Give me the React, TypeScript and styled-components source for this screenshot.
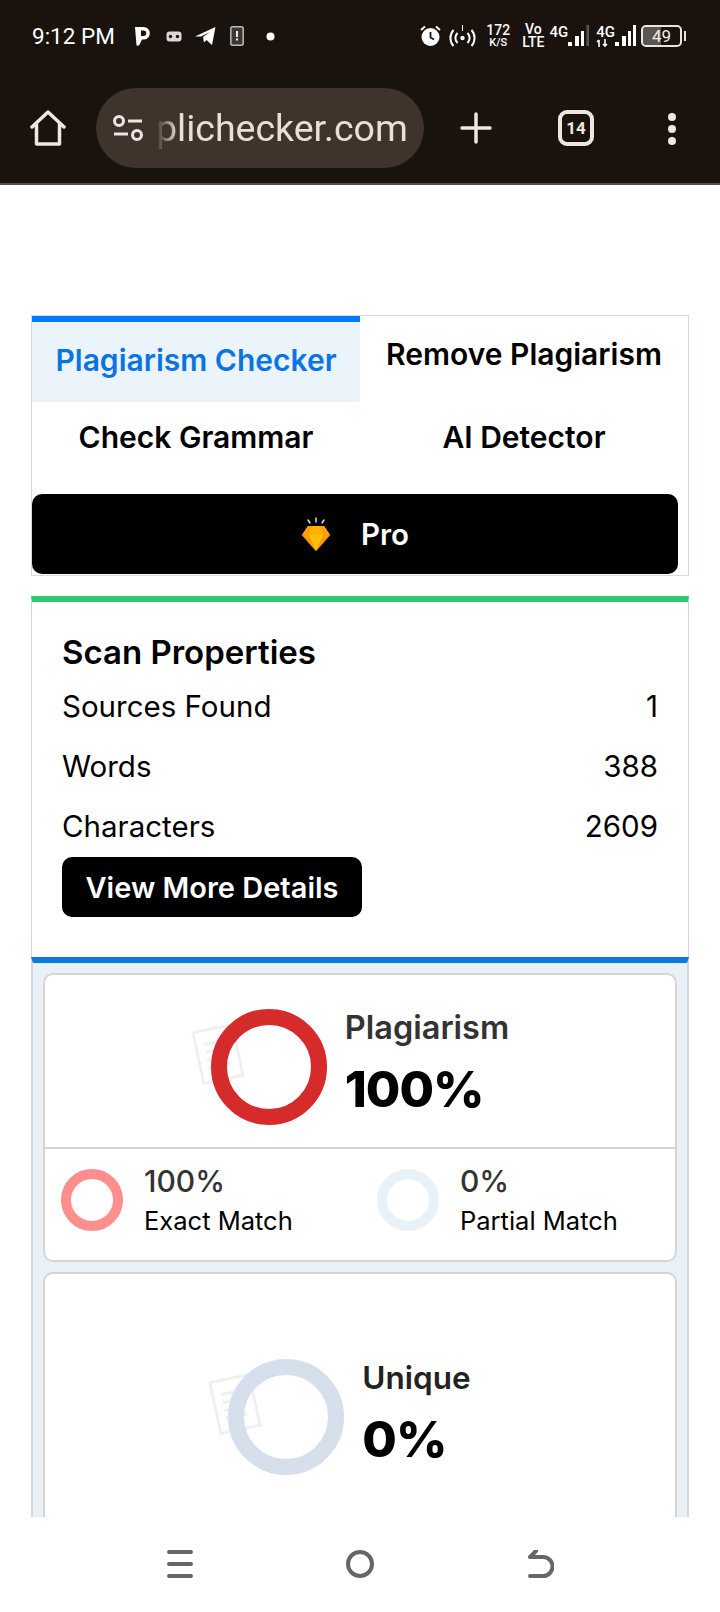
import styled, { createGlobalStyle } from "styled-components";

const GlobalStyle = createGlobalStyle`
  html, body {
    margin: 0;
    padding: 0;
    background: #fff;
  }
  * {
    box-sizing: border-box;
  }
`;

const Page = styled.div`
  width: 720px;
  height: 1612px;
  display: flex;
  flex-direction: column;
  overflow: hidden;
  font-family: Inter, "Liberation Sans", sans-serif;
  color: #000;
`;

const Chrome = styled.header`
  flex: none;
  height: 185px;
  background: #1a120d;
  border-bottom: 2px solid #5c4d44;
`;

const StatusBar = styled.div`
  height: 72px;
  padding: 0 38px 0 32px;
  display: flex;
  align-items: center;
  justify-content: space-between;
  color: #fff;
`;

const StatusGroup = styled.div`
  display: flex;
  align-items: center;
`;

const Time = styled.span`
  font-family: Roboto, sans-serif;
  font-size: 22.5px;
  margin-right: 20px;
`;

const StatusIcon = styled.svg<{ $gap?: number }>`
  display: block;
  flex: none;
  margin-right: ${(p) => p.$gap ?? 0}px;
`;

const Stacked = styled.div<{ $gap?: number }>`
  display: flex;
  flex-direction: column;
  align-items: center;
  font-family: Roboto, sans-serif;
  font-weight: 500;
  margin-right: ${(p) => p.$gap ?? 0}px;
`;

const Big = styled.span`
  font-size: 14px;
  line-height: 13px;
`;

const Small = styled.span`
  font-size: 11px;
  line-height: 11px;
`;

const NetworkStack = styled.div`
  display: flex;
  flex-direction: column;
  align-items: flex-start;
  height: 22px;
  font-family: Roboto, sans-serif;
  font-size: 15px;
  font-weight: 500;
  line-height: 14px;
`;

const Battery = styled.div`
  position: relative;
  width: 41px;
  height: 22px;
  margin-left: 5px;
  border: 2px solid #e8e4e0;
  border-radius: 5px;
  display: flex;
  align-items: center;
  justify-content: center;
  font-family: Roboto, sans-serif;
  font-size: 17px;
  color: #f0ece8;
  background: linear-gradient(90deg, #5b5552 0 50%, transparent 50%);
  background-clip: padding-box;

  &::after {
    content: "";
    position: absolute;
    right: -6px;
    top: 4px;
    width: 2px;
    height: 10px;
    background: #e8e4e0;
  }
`;

const Toolbar = styled.div`
  height: 111px;
  display: flex;
  align-items: flex-start;
  padding-top: 16px;
  color: #efe6e1;
`;

const ToolIcon = styled.svg`
  display: block;
  flex: none;
`;

const HomeSlot = styled.div`
  width: 96px;
  height: 80px;
  padding-left: 30px;
  display: flex;
  align-items: center;
`;

const UrlPill = styled.div`
  width: 328px;
  height: 80px;
  border-radius: 40px;
  background: #40332c;
  display: flex;
  align-items: center;
  padding-left: 17px;
`;

const UrlText = styled.span`
  font-family: Roboto, sans-serif;
  font-size: 37.5px;
  margin-left: 13px;
  color: #e9dfd9;
  -webkit-mask-image: linear-gradient(90deg, transparent 0, #000 22px);
  mask-image: linear-gradient(90deg, transparent 0, #000 22px);
`;

const PlusSlot = styled.div`
  margin-left: 36px;
  height: 80px;
  display: flex;
  align-items: center;
`;

const TabCount = styled.div`
  margin: 22px 0 0 66px;
  width: 36px;
  height: 36px;
  border: 4px solid #efe6e1;
  border-radius: 9px;
  display: flex;
  align-items: center;
  justify-content: center;
  font-family: Roboto, sans-serif;
  font-size: 17px;
  font-weight: 700;
`;

const Dots = styled.div`
  margin: 25px 0 0 74px;
  display: flex;
  flex-direction: column;
  gap: 4px;
`;

const Dot = styled.span`
  width: 8px;
  height: 8px;
  border-radius: 50%;
  background: #efe6e1;
`;

const Content = styled.main`
  flex: 1;
  min-height: 0;
  overflow: hidden;
  padding: 130px 31px 0;
`;

const TabsCard = styled.section`
  height: 261px;
  border: 1px solid #cfdce8;
`;

const TabGrid = styled.div`
  display: grid;
  grid-template-columns: 328px 1fr;
  grid-template-rows: 86px 92px;
`;

const Tab = styled.div<{ $active?: boolean; $top: number }>`
  padding-top: ${(p) => p.$top}px;
  border-top: ${(p) => (p.$active ? "6px solid #007bff" : "none")};
  background: ${(p) => (p.$active ? "#ebf3fb" : "transparent")};
  color: ${(p) => (p.$active ? "#0b74e5" : "#000")};
  text-align: center;
  font-size: 30px;
  font-weight: 600;
  line-height: 36px;
  white-space: nowrap;
`;

const ProButton = styled.div`
  width: 646px;
  height: 80px;
  border-radius: 10px;
  background: #000;
  color: #fff;
  display: flex;
  align-items: center;
  justify-content: center;
  gap: 30px;
  font-size: 29.5px;
  font-weight: 600;
  line-height: 36px;
  padding-bottom: 1px;
`;

const ScanCard = styled.section`
  margin-top: 20px;
  height: 361px;
  border: 1px solid #d6d6d6;
  border-top: 6px solid #2ec971;
  border-bottom: 0;
  padding: 32px 30px 0;
`;

const ScanTitle = styled.h2`
  margin: 0 0 6px;
  font-size: 33px;
  font-weight: 600;
  line-height: 36px;
`;

const ScanRow = styled.div`
  height: 60px;
  display: flex;
  align-items: center;
  justify-content: space-between;
  font-size: 29.5px;
  font-weight: 400;
`;

const DetailsButton = styled.div`
  width: 300px;
  height: 60px;
  margin-top: 1px;
  border-radius: 10px;
  background: #000;
  color: #fff;
  display: flex;
  align-items: center;
  justify-content: center;
  font-size: 29px;
  font-weight: 600;
`;

const ResultPanel = styled.section`
  border: 2px solid #d6d6d6;
  border-top: 6px solid #0d7ae0;
  border-bottom: 0;
  background: #e8f0f8;
  padding: 10px 10px 40px;
  display: flex;
  flex-direction: column;
  gap: 10px;
`;

const ResultCard = styled.div`
  background: #fff;
  border: 2px solid #d5d5d5;
  border-radius: 10px;
`;

const Hero = styled.div<{ $top: number; $bottom: number }>`
  padding: ${(p) => p.$top}px 0 ${(p) => p.$bottom}px;
  display: flex;
  align-items: center;
  justify-content: center;
`;

const RingWrap = styled.div`
  position: relative;
  flex: none;
`;

const Ring = styled.div<{ $size: number; $width: number; $color: string }>`
  position: relative;
  width: ${(p) => p.$size}px;
  height: ${(p) => p.$size}px;
  border-radius: 50%;
  border: ${(p) => p.$width}px solid ${(p) => p.$color};
`;

const Watermark = styled.svg`
  position: absolute;
  left: -20px;
  top: 13px;
`;

const HeroText = styled.div<{ $trail?: number }>`
  margin: -2px 0 0 18px;
  padding-right: ${(p) => p.$trail ?? 0}px;
`;

const HeroLabel = styled.div<{ $color: string; $size: number }>`
  font-size: ${(p) => p.$size}px;
  font-weight: 600;
  line-height: 40px;
  color: ${(p) => p.$color};
`;

const HeroValue = styled.div`
  font-size: 50px;
  font-weight: 800;
  letter-spacing: -1px;
  line-height: 70px;
  margin-top: 6px;
`;

const Breakdown = styled.div`
  border-top: 2px solid #d5d5d5;
  display: grid;
  grid-template-columns: 316px 1fr;
  height: 113px;
`;

const BreakdownItem = styled.div`
  padding: 20px 0 0 16px;
  display: flex;
  align-items: flex-start;
  gap: 21px;
`;

const BreakdownValue = styled.div`
  font-size: 30px;
  font-weight: 500;
  line-height: 38px;
  color: #333;
  margin-top: -7px;
`;

const BreakdownLabel = styled.div`
  font-size: 25.5px;
  line-height: 32px;
  margin-top: 5px;
`;

const BottomNav = styled.nav`
  flex: none;
  height: 95px;
  background: #fff;
  display: flex;
  align-items: flex-start;
  padding: 33px 0 0 167px;
  color: #666;
`;

const NavIcon = styled.svg<{ $gap?: number }>`
  display: block;
  flex: none;
  margin-right: ${(p) => p.$gap ?? 0}px;
`;

function DocMark() {
  return (
    <Watermark width="54" height="64" viewBox="0 0 54 64" fill="none" stroke="#f0f0f0" strokeWidth="3">
      <g transform="rotate(-12 27 32)">
        <rect x="7" y="6" width="40" height="52" />
        <path d="M15 20h22M15 28h22M15 36h22M15 44h22" strokeWidth="3" />
      </g>
    </Watermark>
  );
}

function Diamond() {
  return (
    <svg width="30" height="34" viewBox="0 0 30 34">
      <path d="M15 1v4M7 3l2 3M23 3l-2 3" stroke="#ddd" strokeWidth="1.5" strokeLinecap="round" />
      <path d="M7 9h16l6 9-14 16L1 18z" fill="#ffc107" />
      <path d="M1 18h7l7 16z" fill="#ff9800" />
      <path d="M29 18h-7l-7 16z" fill="#ff9800" />
      <path d="M8 18l3-9h8l3 9z" fill="#ffb300" />
      <path d="M7 9l4 0-3 9H1z" fill="#ffa000" />
      <path d="M23 9h-4l3 9h7z" fill="#ffa000" />
    </svg>
  );
}

export default function App() {
  return (
    <Page>
      <GlobalStyle />
      <Chrome>
        <StatusBar>
          <StatusGroup>
            <Time>9:12 PM</Time>
            <StatusIcon $gap={16} width="15" height="20" viewBox="0 0 15 20">
              <path
                fillRule="evenodd"
                fill="#fff"
                d="M0 1h8.500a6.300 6.300 0 0 1 0 12.600H7L4 19.500H1.500zM6 4.500v5.500h2.500a2.750 2.750 0 0 0 0-5.500z"
              />
            </StatusIcon>
            <StatusIcon $gap={13} width="16" height="11" viewBox="0 0 16 11">
              <rect x="0.500" y="0.500" width="15" height="10" rx="3" fill="#d8d8d8" />
              <circle cx="4.500" cy="5.500" r="1.700" fill="#1a120d" />
              <circle cx="11.500" cy="5.500" r="1.700" fill="#1a120d" />
            </StatusIcon>
            <StatusIcon $gap={14} width="21" height="18" viewBox="0 0 21 18">
              <path fill="#fff" d="M0 9.500 20.500 0 17 18l-5.500-5-2.500 2.500-1-5.500 7-5-9 4.500z" />
            </StatusIcon>
            <StatusIcon $gap={22} width="14" height="20" viewBox="0 0 14 20">
              <rect x="0.800" y="0.800" width="12.400" height="18.400" rx="2" fill="#3b3735" stroke="#bdbdbd" strokeWidth="1.500" />
              <path d="M7 5v6M7 12.500v2" stroke="#eee" strokeWidth="2" />
            </StatusIcon>
            <StatusIcon width="9" height="9" viewBox="0 0 9 9">
              <circle cx="4.500" cy="4.500" r="4" fill="#fff" />
            </StatusIcon>
          </StatusGroup>
          <StatusGroup>
            <StatusIcon $gap={8} width="21" height="22" viewBox="0 0 21 22">
              <circle cx="10.500" cy="12" r="9" fill="#fff" />
              <path d="M10.500 7v5.500l3.500 2" stroke="#1a120d" strokeWidth="1.800" fill="none" />
              <path d="M1 5l4-3.500M20 5l-4-3.500" stroke="#fff" strokeWidth="2" />
            </StatusIcon>
            <StatusIcon $gap={10} width="27" height="24" viewBox="0 0 27 24" fill="none" stroke="#fff" strokeWidth="2">
              <circle cx="13.500" cy="14" r="2.200" fill="#fff" stroke="none" />
              <path d="M8.500 9a7 7 0 0 0 0 10M18.500 9a7 7 0 0 1 0 10M4.500 6a12 12 0 0 0 0 16M22.500 6a12 12 0 0 1 0 16" />
              <path d="M13.500 1v6" strokeWidth="1" />
            </StatusIcon>
            <Stacked $gap={12}>
              <Big>172</Big>
              <Small>K/S</Small>
            </Stacked>
            <Stacked $gap={5}>
              <Big>Vo</Big>
              <Big>LTE</Big>
            </Stacked>
            <NetworkStack>4G</NetworkStack>
            <StatusIcon $gap={7} width="21" height="22" viewBox="0 0 21 22">
              <rect x="0" y="17" width="4" height="4" fill="#fff" />
              <rect x="7" y="11" width="4" height="10" fill="#fff" />
              <rect x="13" y="6" width="3" height="15" fill="#fff" />
              <rect x="18.500" y="0" width="2.500" height="21" fill="#5b5552" />
            </StatusIcon>
            <NetworkStack>
              4G
              <StatusIcon width="12" height="8" viewBox="0 0 12 8">
                <path d="M3 8V1M1 3l2-2M9 0v7M7 5l2 2 2-2" stroke="#fff" strokeWidth="1.600" fill="none" />
              </StatusIcon>
            </NetworkStack>
            <StatusIcon width="21" height="22" viewBox="0 0 21 22">
              <rect x="0" y="17" width="4" height="4" fill="#fff" />
              <rect x="7" y="11" width="4" height="10" fill="#fff" />
              <rect x="13" y="6" width="3" height="15" fill="#fff" />
              <rect x="18" y="0" width="3" height="21" fill="#fff" />
            </StatusIcon>
            <Battery>49</Battery>
          </StatusGroup>
        </StatusBar>
        <Toolbar>
          <HomeSlot>
            <ToolIcon width="36" height="36" viewBox="0 0 36 36" fill="none" stroke="#efe6e1" strokeWidth="3.500" strokeLinejoin="round" strokeLinecap="round">
              <path d="M2 17 18 2l16 15M6.500 13.500V34h23V13.500" />
            </ToolIcon>
          </HomeSlot>
          <UrlPill>
            <ToolIcon width="30" height="26" viewBox="0 0 30 26" fill="none" stroke="#efe6e1" strokeWidth="3">
              <circle cx="6" cy="6" r="4.500" />
              <path d="M15 6h14M1 19h14" />
              <circle cx="24" cy="20" r="4.500" />
            </ToolIcon>
            <UrlText>plichecker.com</UrlText>
          </UrlPill>
          <PlusSlot>
            <ToolIcon width="32" height="32" viewBox="0 0 32 32" stroke="#efe6e1" strokeWidth="3.500" strokeLinecap="round">
              <path d="M16 2v28M2 16h28" />
            </ToolIcon>
          </PlusSlot>
          <TabCount>14</TabCount>
          <Dots>
            <Dot />
            <Dot />
            <Dot />
          </Dots>
        </Toolbar>
      </Chrome>

      <Content>
        <TabsCard>
          <TabGrid>
            <Tab $active $top={20}>Plagiarism Checker</Tab>
            <Tab $top={20}>Remove Plagiarism</Tab>
            <Tab $top={17}>Check Grammar</Tab>
            <Tab $top={17}>AI Detector</Tab>
          </TabGrid>
          <ProButton>
            <Diamond />
            Pro
          </ProButton>
        </TabsCard>

        <ScanCard>
          <ScanTitle>Scan Properties</ScanTitle>
          <ScanRow>
            <span>Sources Found</span>
            <span>1</span>
          </ScanRow>
          <ScanRow>
            <span>Words</span>
            <span>388</span>
          </ScanRow>
          <ScanRow>
            <span>Characters</span>
            <span>2609</span>
          </ScanRow>
          <DetailsButton>View More Details</DetailsButton>
        </ScanCard>

        <ResultPanel>
          <ResultCard>
            <Hero $top={34} $bottom={22}>
              <RingWrap>
                <DocMark />
                <Ring $size={116} $width={16} $color="#d62b2b" />
              </RingWrap>
              <HeroText>
                <HeroLabel $color="#333" $size={32.5}>Plagiarism</HeroLabel>
                <HeroValue>100%</HeroValue>
              </HeroText>
            </Hero>
            <Breakdown>
              <BreakdownItem>
                <Ring $size={62} $width={10} $color="#ff8f8f" />
                <div>
                  <BreakdownValue>100%</BreakdownValue>
                  <BreakdownLabel>Exact Match</BreakdownLabel>
                </div>
              </BreakdownItem>
              <BreakdownItem>
                <Ring $size={62} $width={10} $color="#e8f0f8" />
                <div>
                  <BreakdownValue>0%</BreakdownValue>
                  <BreakdownLabel>Partial Match</BreakdownLabel>
                </div>
              </BreakdownItem>
            </Breakdown>
          </ResultCard>
          <ResultCard>
            <Hero $top={85} $bottom={60}>
              <RingWrap>
                <DocMark />
                <Ring $size={116} $width={16} $color="#d6e0ec" />
              </RingWrap>
              <HeroText $trail={21}>
                <HeroLabel $color="#222" $size={31.5}>Unique</HeroLabel>
                <HeroValue>0%</HeroValue>
              </HeroText>
            </Hero>
          </ResultCard>
        </ResultPanel>
      </Content>

      <BottomNav>
        <NavIcon $gap={153} width="26" height="28" viewBox="0 0 26 28" stroke="#666" strokeWidth="4" strokeLinecap="round">
          <path d="M2 2h22M2 14h22M2 26h22" />
        </NavIcon>
        <NavIcon $gap={154} width="28" height="28" viewBox="0 0 28 28" fill="none" stroke="#666" strokeWidth="4">
          <circle cx="14" cy="14" r="12" />
        </NavIcon>
        <NavIcon width="26" height="28" viewBox="0 0 26 28" fill="none" stroke="#666" strokeWidth="4" strokeLinecap="round">
          <path d="M2 26h13a9 9 0 0 0 0-19H2M8 1 2 7" />
        </NavIcon>
      </BottomNav>
    </Page>
  );
}
